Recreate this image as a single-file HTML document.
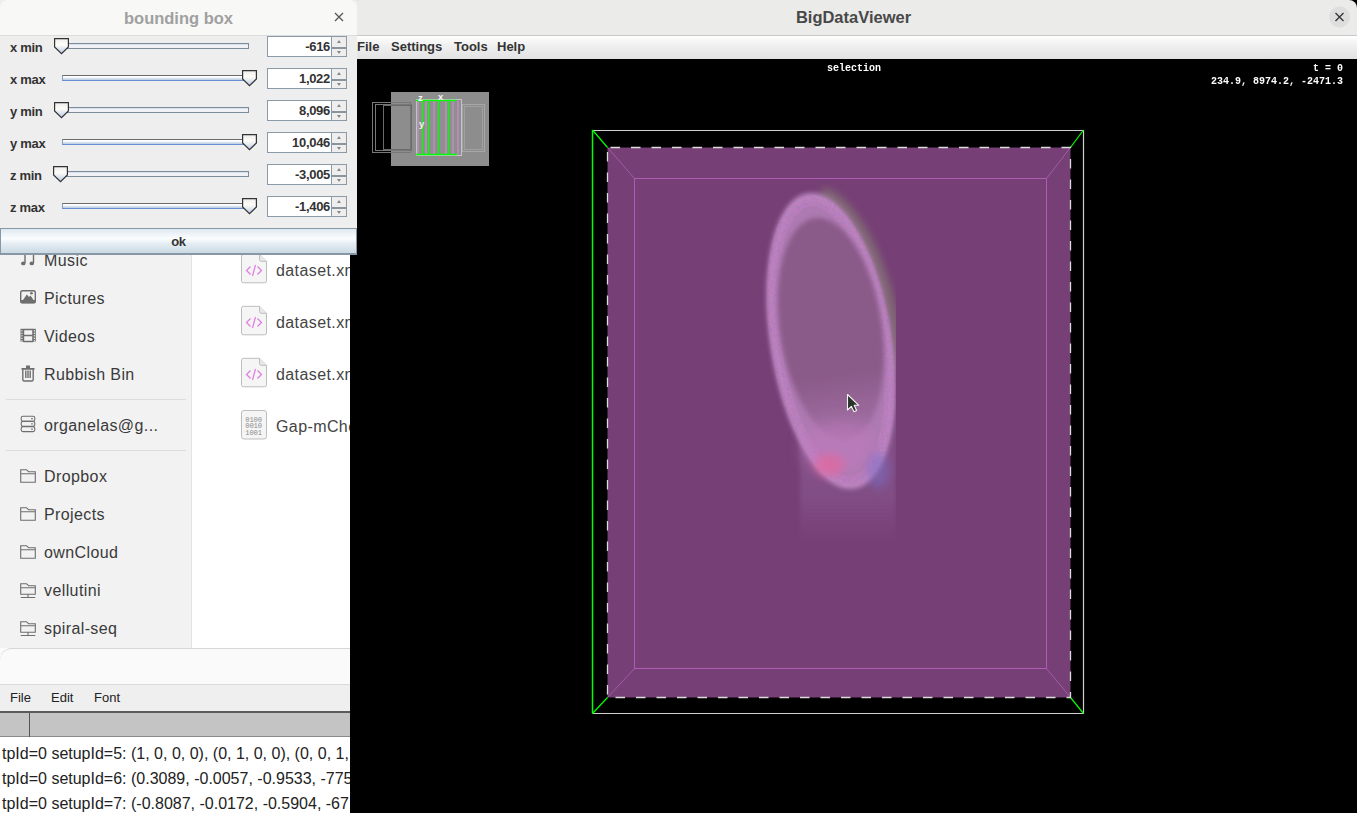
<!DOCTYPE html>
<html><head><meta charset="utf-8">
<style>
*{margin:0;padding:0;box-sizing:border-box}
html,body{width:1357px;height:813px;overflow:hidden;background:#72286a;font-family:"Liberation Sans",sans-serif}
.abs{position:absolute}
/* file manager */
#fm{left:0;top:40px;width:350px;height:610px;background:#fff}
#fmside{left:0;top:0;width:192px;height:610px;background:#f2f2f2;border-right:1px solid #e4e4e4}
.si{position:absolute;left:44px;font-size:16px;color:#3a3a3a;letter-spacing:0.4px;white-space:nowrap}
.sep{position:absolute;left:6px;width:180px;height:1px;background:#dcdcdc}
.fi{position:absolute;left:276px;font-size:16px;color:#444;white-space:nowrap;letter-spacing:0.4px}
/* text editor */
#te{left:0;top:648px;width:350px;height:165px;background:#fafafa}
/* dialog */
#dlg{left:0;top:0;width:357px;height:255px;background:#eeeeee}
#dlgt{left:0;top:0;width:357px;height:36px;background:#f8f8f6;border-bottom:1px solid #dcdcdc;border-top-left-radius:8px;border-top-right-radius:8px}
.lbl{position:absolute;left:10px;font-size:13px;font-weight:bold;color:#333;letter-spacing:-0.3px}
.fld{position:absolute;left:267px;width:65px;height:21px;background:#fff;border:1px solid #8a9aa8;font-size:13px;font-weight:bold;color:#333;text-align:right;padding-right:1px;line-height:19px;letter-spacing:-0.3px}
.spn{position:absolute;left:331px;width:16px;height:21px;background:#eeeeee;border:1px solid #8a9aa8}
/* bdv */
#bdv{left:350px;top:0;width:1007px;height:813px;background:#000}
#bdvt{left:0;top:0;width:1007px;height:36px;background:#ebebea;border-bottom:1px solid #c8c8c8;border-top-left-radius:8px;border-top-right-radius:8px}
#bdvm{left:0;top:36px;width:1007px;height:23px;background:linear-gradient(#fff,#f0f0f0 40%,#e2e2e2)}
.mi{position:absolute;top:3px;font-size:13px;font-weight:bold;color:#333}
.mono{font-family:"Liberation Mono",monospace;font-weight:bold;color:#fff;font-size:10px;white-space:nowrap}

.trk{position:absolute;height:6px}
.tmin{border:1px solid #7d8c9b;border-left:none;background:linear-gradient(#c9d6e6,#f3f3f8 40%,#f0f0f4)}
.tmax{border-top:1px solid #6a6a6a;border-bottom:1px solid #6b8fd2;border-left:1px solid #8a9ab0;background:linear-gradient(#fff 10%,#f2f6fb 40%,#b4c8e0)}
.sd{position:absolute;left:0;top:10px;width:14px;height:2px;background:#8a949c}
.ua{position:absolute;left:5px;top:3px;width:0;height:0;border-left:2.5px solid transparent;border-right:2.5px solid transparent;border-bottom:3px solid #888}
.da{position:absolute;left:5px;top:13.5px;width:0;height:0;border-left:2.5px solid transparent;border-right:2.5px solid transparent;border-top:3px solid #888}
.okb{left:0;top:228px;width:357px;height:27px;border:1px solid #8797a6;border-bottom:2px solid #8797a6;background:linear-gradient(#dfe8f0,#fbfdfe 40%,#e6eef4 60%,#cbd9e4);text-align:center;font-size:13px;font-weight:bold;color:#333;line-height:25px;letter-spacing:-0.3px}
.tl{position:absolute;left:2px;font-size:16px;color:#222;white-space:nowrap}
#te{overflow:hidden}
</style></head><body>

<!-- file manager -->
<div id="fm" class="abs">
  <div id="fmside" class="abs"></div>
  <svg class="abs" style="left:0;top:-40px" width="350" height="650">
    <g fill="none" stroke="#6e6e6e" stroke-width="1.4">
      <!-- music -->
      <path d="M25 263 V252 M33.5 263 V252" />
      <!-- pictures -->
      <rect x="20.7" y="290.7" width="14.6" height="12" rx="1.8"/>
      <!-- videos -->
      <path d="M23.5 329 V342 M33 329 V342 M23.5 329.5 H33 M23.5 335.5 H33 M23.5 341.5 H33"/>
      <!-- trash -->
      <path d="M22.8 369 V379.5 Q22.8 381 24.3 381 H31.7 Q33.2 381 33.2 379.5 V369 M25.8 370.5 V378 M28 370.5 V378 M30.2 370.5 V378"/>
      <!-- server -->
      <rect x="21.2" y="416.2" width="13.6" height="5" rx="1.8" stroke-width="1.1"/>
      <rect x="21.2" y="421.4" width="13.6" height="5" rx="1.8" stroke-width="1.1"/>
      <rect x="21.2" y="426.6" width="13.6" height="5" rx="1.8" stroke-width="1.1"/>
      <!-- folders -->
      <path d="M20.7 469.7 H26.5 L28.5 471.7 H35.3 V482.3 H20.7 Z M20.7 473.7 H35.3" stroke-width="1.1"/>
      <path d="M20.7 507.7 H26.5 L28.5 509.7 H35.3 V520.3 H20.7 Z M20.7 511.7 H35.3" stroke-width="1.1"/>
      <path d="M20.7 545.7 H26.5 L28.5 547.7 H35.3 V558.3 H20.7 Z M20.7 549.7 H35.3" stroke-width="1.1"/>
      <path d="M20.7 583.7 H26.5 L28.5 585.7 H35.3 V594.3 H20.7 Z M20.7 587.7 H35.3 M20.7 597.5 H35.3 M28 594.3 V597.5" stroke-width="1.1"/>
      <path d="M20.7 621.7 H26.5 L28.5 623.7 H35.3 V632.3 H20.7 Z M20.7 625.7 H35.3 M20.7 635.5 H35.3 M28 632.3 V635.5" stroke-width="1.1"/>
    </g>
    <g fill="#6e6e6e">
      <ellipse cx="23.3" cy="263.4" rx="2.2" ry="1.9"/><ellipse cx="31.8" cy="263.4" rx="2.2" ry="1.9"/>
      <path d="M23 300 L26.8 294.5 L29 297 L30.5 295.5 L33.5 300 Z"/>
      <rect x="20.5" y="300" width="15" height="3.3" rx="1"/>
      <circle cx="31.5" cy="293.3" r="1.3"/>
      <rect x="20.5" y="328.8" width="3" height="12.8"/><rect x="32.8" y="328.8" width="3" height="12.8"/>
      <path d="M21.5 368 H34.5 V369.8 H21.5 Z M26 365.5 H30 V368 H26 Z"/>
      <rect x="31" y="418.2" width="2" height="1"/><rect x="31" y="423.4" width="2" height="1"/><rect x="31" y="428.6" width="2" height="1"/>
    </g>
    <g fill="#f2f2f2">
      <rect x="21.3" y="330.2" width="1.2" height="1.2"/><rect x="21.3" y="332.7" width="1.2" height="1.2"/><rect x="21.3" y="335.2" width="1.2" height="1.2"/><rect x="21.3" y="337.7" width="1.2" height="1.2"/><rect x="21.3" y="340.2" width="1.2" height="1.2"/>
      <rect x="33.8" y="330.2" width="1.2" height="1.2"/><rect x="33.8" y="332.7" width="1.2" height="1.2"/><rect x="33.8" y="335.2" width="1.2" height="1.2"/><rect x="33.8" y="337.7" width="1.2" height="1.2"/><rect x="33.8" y="340.2" width="1.2" height="1.2"/>
    </g>
    <g fill="#f5f5f5" stroke="#bdbdbd" stroke-width="1">
      <path d="M241.5 256.3 Q241.5 254.3 243.5 254.3 H259.5 L266.5 261.3 V280.8 Q266.5 282.8 264.5 282.8 H243.5 Q241.5 282.8 241.5 280.8 Z"/><path d="M259.5 254.3 V259.3 Q259.5 261.3 261.5 261.3 H266.5" fill="#e8e8e8"/>
      <path d="M241.5 308.3 Q241.5 306.3 243.5 306.3 H259.5 L266.5 313.3 V332.8 Q266.5 334.8 264.5 334.8 H243.5 Q241.5 334.8 241.5 332.8 Z"/><path d="M259.5 306.3 V311.3 Q259.5 313.3 261.5 313.3 H266.5" fill="#e8e8e8"/>
      <path d="M241.5 360.3 Q241.5 358.3 243.5 358.3 H259.5 L266.5 365.3 V384.8 Q266.5 386.8 264.5 386.8 H243.5 Q241.5 386.8 241.5 384.8 Z"/><path d="M259.5 358.3 V363.3 Q259.5 365.3 261.5 365.3 H266.5" fill="#e8e8e8"/>
      <path d="M241.5 413 Q241.5 410.5 244 410.5 H264 Q266.5 410.5 266.5 413 V436.5 Q266.5 439 264 439 H244 Q241.5 439 241.5 436.5 Z"/>
    </g>
    <g fill="none" stroke="#e07ae0" stroke-width="1.2">
      <path d="M250.5 266.5 L246.5 270.5 L250.5 274.5 M257.5 266.5 L261.5 270.5 L257.5 274.5 M255.5 265 L252.5 276"/>
      <path d="M250.5 318.5 L246.5 322.5 L250.5 326.5 M257.5 318.5 L261.5 322.5 L257.5 326.5 M255.5 317 L252.5 328"/>
      <path d="M250.5 370.5 L246.5 374.5 L250.5 378.5 M257.5 370.5 L261.5 374.5 L257.5 378.5 M255.5 369 L252.5 380"/>
    </g>
    <g font-family="Liberation Mono" font-size="7.2" fill="#8c8c8c" letter-spacing="-0.2">
      <text x="245.3" y="421.5">0100</text><text x="245.3" y="428.3">0010</text><text x="245.3" y="435.1">1001</text>
    </g>
  </svg>
  <div class="si" style="top:212px">Music</div>
  <div class="si" style="top:250px">Pictures</div>
  <div class="si" style="top:288px">Videos</div>
  <div class="si" style="top:326px">Rubbish Bin</div>
  <div class="sep" style="top:359px"></div>
  <div class="si" style="top:377px">organelas@g...</div>
  <div class="sep" style="top:410px"></div>
  <div class="si" style="top:428px">Dropbox</div>
  <div class="si" style="top:466px">Projects</div>
  <div class="si" style="top:504px">ownCloud</div>
  <div class="si" style="top:542px">vellutini</div>
  <div class="si" style="top:580px">spiral-seq</div>
  <div class="fi" style="top:222px">dataset.xml</div>
  <div class="fi" style="top:274px">dataset.xml</div>
  <div class="fi" style="top:326px">dataset.xml</div>
  <div class="fi" style="top:378px">Gap-mCherry</div>
</div>

<!-- text editor -->
<div id="te" class="abs">
  <div class="abs" style="left:0;top:0;width:350px;height:37px;background:#fafafa;border-top:1px solid #d6d6d6;border-top-left-radius:12px;border-bottom:1px solid #dadada"></div>
  <div class="abs" style="left:0;top:37px;width:350px;height:26px;background:#efefef"></div>
  <div class="abs" style="left:10px;top:42px;font-size:13px;color:#222">File</div>
  <div class="abs" style="left:51px;top:42px;font-size:13px;color:#222">Edit</div>
  <div class="abs" style="left:94px;top:42px;font-size:13px;color:#222">Font</div>
  <div class="abs" style="left:0;top:63px;width:350px;height:2px;background:#5a5a5a"></div>
  <div class="abs" style="left:0;top:65px;width:350px;height:24px;background:#c4c4c4;border-bottom:1px solid #8a8a8a"></div>
  <div class="abs" style="left:29px;top:65px;width:1px;height:24px;background:#555"></div>
  <div class="abs" style="left:0;top:89px;width:350px;height:76px;background:#fff"></div>
  <div class="tl" style="top:97px">tpId=0 setupId=5: (1, 0, 0, 0), (0, 1, 0, 0), (0, 0, 1, 0)</div>
  <div class="tl" style="top:122px">tpId=0 setupId=6: (0.3089, -0.0057, -0.9533, -775.1)</div>
  <div class="tl" style="top:147px">tpId=0 setupId=7: (-0.8087, -0.0172, -0.5904, -671.2)</div>
</div>

<!-- bdv -->
<div id="bdv" class="abs">
  <div id="bdvt" class="abs"></div>
  <div class="abs" style="left:0;width:1007px;top:8px;text-align:center;font-size:16.5px;font-weight:bold;color:#484848;line-height:19px">BigDataViewer</div>
  <svg class="abs" style="left:978px;top:6px" width="23" height="23"><circle cx="11.5" cy="11" r="10.5" fill="#dedede"/><path d="M7.5 7 L15.5 15 M15.5 7 L7.5 15" stroke="#333" stroke-width="1.3"/></svg>
  <div id="bdvm" class="abs"></div>
  <div class="mi" style="left:7px;top:39px">File</div>
  <div class="mi" style="left:41px;top:39px">Settings</div>
  <div class="mi" style="left:104px;top:39px">Tools</div>
  <div class="mi" style="left:147px;top:39px">Help</div>
  <svg class="abs" style="left:0;top:59px" width="1007" height="754" viewBox="350 59 1007 754">
    <defs>
      <filter id="blur2" x="-50%" y="-50%" width="200%" height="200%"><feGaussianBlur stdDeviation="2"/></filter>
      <filter id="blur5" x="-50%" y="-50%" width="200%" height="200%"><feGaussianBlur stdDeviation="5"/></filter>
      <filter id="blur10" x="-50%" y="-50%" width="200%" height="200%"><feGaussianBlur stdDeviation="10"/></filter>
    </defs>
    <!-- overview -->
    <rect x="391" y="92" width="98" height="74" fill="#8d8d8d"/>
    <g fill="none" stroke="#b4b4b4" stroke-width="1">
      <rect x="372.5" y="102.5" width="38" height="50" stroke="#777"/>
      <rect x="375.5" y="104.5" width="36" height="46" stroke="#777"/>
      <rect x="383.5" y="105.5" width="28" height="44" stroke="#6a6a6a"/>
      <rect x="462.5" y="104.5" width="22" height="47" stroke="#a8a8a8"/>
      <rect x="464.5" y="106.5" width="18" height="43" stroke="#a0a0a0"/>
    </g>
    <rect x="416.5" y="99.5" width="45" height="56" fill="#968a96" stroke="#c4c4c4"/>
    <g stroke="#bf9cbf" stroke-width="1.2" opacity="0.85">
      <path d="M418 101 V155 M426 101 V155 M434 101 V155 M446 101 V155 M453 101 V155 M458 101 V155"/>
    </g>
    <g stroke="#00ff00" stroke-width="1.5" fill="none">
      <path d="M416 100.5 H456 M416 154.5 H457 M422.5 100 V155 M428.5 102 V155 M438.5 100 V155 M448.5 102 V155"/>
    </g>
    <g font-family="Liberation Sans" font-size="9.5" font-weight="bold" fill="#f4f4f4">
      <text x="418" y="101">z</text><text x="438" y="100">x</text><text x="419" y="127">y</text>
    </g>
    <!-- big box -->
    <rect x="607.5" y="147.5" width="463" height="550" fill="#763f75"/>
    <g fill="none" stroke="#a45aa8" stroke-width="1">
      <rect x="634.5" y="178.5" width="412" height="490" stroke="#b05cb6"/>
      <path d="M607.5 147.5 L634.5 178.5 M1070.5 147.5 L1046.5 178.5 M607.5 697.5 L634.5 668.5 M1070.5 697.5 L1046.5 668.5"/>
    </g>
    <g fill="none" stroke-width="1.5">
      <path d="M592.5 130.5 H1083.5 V713.5 H592.5" stroke="#d0d0d0" stroke-width="1.2"/>
      <path d="M592.5 130 V713.5" stroke="#00ff00"/>
      <path d="M592.5 130 L607.5 147.5 M1083.5 130 L1070.5 147.5 M592.5 713.5 L607.5 697.5 M1083.5 713.5 L1070.5 697.5" stroke="#00ff00" stroke-width="1.2"/>
    </g>
    <rect x="607.5" y="147.5" width="463" height="550" fill="none" stroke="#dcdcdc" stroke-width="1.3" stroke-dasharray="9.5 11" stroke-dashoffset="-3"/>
    <!-- blob -->
    <g id="blob">
      <defs>
        <filter id="b2" x="-50%" y="-50%" width="200%" height="200%"><feGaussianBlur stdDeviation="2.5"/></filter>
        <filter id="b4" x="-50%" y="-50%" width="200%" height="200%"><feGaussianBlur stdDeviation="4"/></filter>
        <filter id="b8" x="-50%" y="-50%" width="200%" height="200%"><feGaussianBlur stdDeviation="8"/></filter>
        <filter id="tex" x="-10%" y="-10%" width="120%" height="120%">
          <feTurbulence type="fractalNoise" baseFrequency="0.45" numOctaves="2" seed="3" result="n"/>
          <feColorMatrix in="n" type="matrix" values="1.6 0 0 0 -0.1  0 0.3 0 0 0.1  0 0 1.2 0 0.1  0 0 0 0 1" result="c"/>
          <feComposite in="c" in2="SourceAlpha" operator="in" result="t"/>
          <feGaussianBlur in="t" stdDeviation="0.7"/>
        </filter>
        <clipPath id="bc"><rect x="700" y="150" width="196" height="420"/></clipPath>
        <linearGradient id="inng" x1="0" y1="0" x2="0" y2="1"><stop offset="0" stop-color="#8a5a88"/><stop offset="0.7" stop-color="#8a5a88"/><stop offset="1" stop-color="#8a5a88" stop-opacity="0.25"/></linearGradient>
        <linearGradient id="tailg" x1="0" y1="0" x2="0" y2="1"><stop offset="0" stop-color="#8c5c94" stop-opacity="0.7"/><stop offset="0.65" stop-color="#8c5c94" stop-opacity="0.5"/><stop offset="1" stop-color="#8c5c94" stop-opacity="0"/></linearGradient>
      </defs>
      <g clip-path="url(#bc)">
      <rect x="800" y="400" width="96" height="145" fill="url(#tailg)" filter="url(#b2)"/>
      <g transform="translate(831,341) rotate(-9)">
        <path d="M 62 40 A 63 152 0 0 0 14 -148" fill="none" stroke="#8c9476" stroke-width="10" opacity="0.6" filter="url(#b4)"/>
        <ellipse rx="60" ry="149" fill="#ad7ab2" filter="url(#b2)"/>
        <ellipse rx="58" ry="147" fill="none" stroke="#c89ad0" stroke-width="4" opacity="0.55" filter="url(#b2)"/>
        <ellipse rx="55" ry="142" fill="none" stroke="#fff" stroke-width="11" opacity="0.22" filter="url(#tex)"/>
      </g>
      <g transform="translate(831,329) rotate(-8.5)">
        <ellipse rx="51" ry="112" fill="url(#inng)" filter="url(#b2)"/>
      </g>
      <ellipse cx="840" cy="448" rx="38" ry="26" fill="#c47cc0" opacity="0.5" filter="url(#b8)"/>
      <ellipse cx="829" cy="465" rx="15" ry="11" fill="#ec6498" opacity="0.6" filter="url(#b4)"/>
      <ellipse cx="878" cy="470" rx="11" ry="18" fill="#7a70c8" opacity="0.5" filter="url(#b4)"/>
      </g>
    </g>
    <!-- cursor -->
    <path d="M847.5 394.5 V410 L851.3 406.3 L854 411.8 L856.6 410.6 L854.2 405.3 L858.8 405.3 Z" fill="#2a332a" stroke="#f4f4f4" stroke-width="1.1" stroke-linejoin="round"/>
  </svg>
  <div class="abs mono" style="left:477px;top:62px;transform:scaleY(1.12);transform-origin:0 0">selection</div>
  <div class="abs mono" style="right:14px;top:62px;transform:scaleY(1.12);transform-origin:0 0">t = 0</div>
  <div class="abs mono" style="right:14px;top:75px;transform:scaleY(1.12);transform-origin:0 0">234.9, 8974.2, -2471.3</div>

</div>

<!-- dialog -->
<div id="dlg" class="abs">
  <div id="dlgt" class="abs"></div>
  <div class="abs" style="left:0;width:357px;top:9px;text-align:center;font-size:16.5px;font-weight:bold;color:#a0a0a0;line-height:19px">bounding box</div>
  <svg width="0" height="0" style="position:absolute"><defs><linearGradient id="tg" x1="0" y1="0" x2="0" y2="1"><stop offset="0" stop-color="#ececec"/><stop offset="0.4" stop-color="#fffdf8"/><stop offset="1" stop-color="#b8cde4"/></linearGradient></defs></svg>
  <svg class="abs" style="left:334px;top:12px" width="10" height="10"><path d="M1 1 L9 9 M9 1 L1 9" stroke="#555" stroke-width="1.3"/></svg>
  <div class="lbl" style="top:40px">x min</div>
  <div class="trk tmin" style="left:62px;top:43px;width:187px"></div>
  <svg class="abs" style="left:54px;top:38px" width="16" height="17" viewBox="0 0 16 17"><path d="M0.6 0.6 H14.4 V9 L7.5 15.6 L0.6 9 Z" fill="url(#tg)" stroke="#333" stroke-width="1.2"/></svg>
  <div class="fld" style="top:36px">-616</div>
  <div class="spn" style="top:36px"><div class="sd"></div><div class="ua"></div><div class="da"></div></div>
  <div class="lbl" style="top:72px">x max</div>
  <div class="trk tmax" style="left:62px;top:75px;width:187px"></div>
  <svg class="abs" style="left:242px;top:70px" width="16" height="17" viewBox="0 0 16 17"><path d="M0.6 0.6 H14.4 V9 L7.5 15.6 L0.6 9 Z" fill="url(#tg)" stroke="#333" stroke-width="1.2"/></svg>
  <div class="fld" style="top:68px">1,022</div>
  <div class="spn" style="top:68px"><div class="sd"></div><div class="ua"></div><div class="da"></div></div>
  <div class="lbl" style="top:104px">y min</div>
  <div class="trk tmin" style="left:62px;top:107px;width:187px"></div>
  <svg class="abs" style="left:54px;top:102px" width="16" height="17" viewBox="0 0 16 17"><path d="M0.6 0.6 H14.4 V9 L7.5 15.6 L0.6 9 Z" fill="url(#tg)" stroke="#333" stroke-width="1.2"/></svg>
  <div class="fld" style="top:100px">8,096</div>
  <div class="spn" style="top:100px"><div class="sd"></div><div class="ua"></div><div class="da"></div></div>
  <div class="lbl" style="top:136px">y max</div>
  <div class="trk tmax" style="left:62px;top:139px;width:187px"></div>
  <svg class="abs" style="left:242px;top:134px" width="16" height="17" viewBox="0 0 16 17"><path d="M0.6 0.6 H14.4 V9 L7.5 15.6 L0.6 9 Z" fill="url(#tg)" stroke="#333" stroke-width="1.2"/></svg>
  <div class="fld" style="top:132px">10,046</div>
  <div class="spn" style="top:132px"><div class="sd"></div><div class="ua"></div><div class="da"></div></div>
  <div class="lbl" style="top:168px">z min</div>
  <div class="trk tmin" style="left:62px;top:171px;width:187px"></div>
  <svg class="abs" style="left:53px;top:166px" width="16" height="17" viewBox="0 0 16 17"><path d="M0.6 0.6 H14.4 V9 L7.5 15.6 L0.6 9 Z" fill="url(#tg)" stroke="#333" stroke-width="1.2"/></svg>
  <div class="fld" style="top:164px">-3,005</div>
  <div class="spn" style="top:164px"><div class="sd"></div><div class="ua"></div><div class="da"></div></div>
  <div class="lbl" style="top:200px">z max</div>
  <div class="trk tmax" style="left:62px;top:203px;width:187px"></div>
  <svg class="abs" style="left:242px;top:198px" width="16" height="17" viewBox="0 0 16 17"><path d="M0.6 0.6 H14.4 V9 L7.5 15.6 L0.6 9 Z" fill="url(#tg)" stroke="#333" stroke-width="1.2"/></svg>
  <div class="fld" style="top:196px">-1,406</div>
  <div class="spn" style="top:196px"><div class="sd"></div><div class="ua"></div><div class="da"></div></div>
  <div class="abs okb">ok</div>

</div>

</body></html>
